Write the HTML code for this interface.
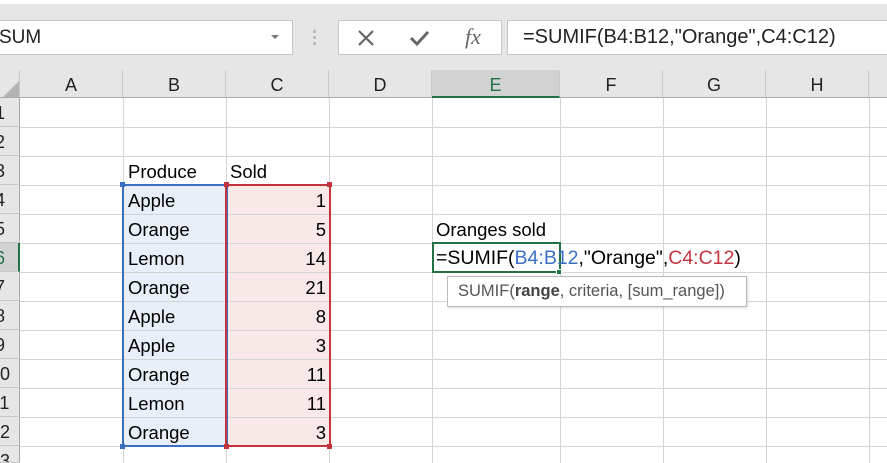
<!DOCTYPE html>
<html><head><meta charset="utf-8"><style>
*{margin:0;padding:0;box-sizing:border-box}
html,body{width:887px;height:463px;overflow:hidden}
body{background:#fff;font-family:"Liberation Sans",sans-serif;position:relative}
.a{position:absolute}
.top{left:0;top:0;width:887px;height:70px;background:#e6e6e6;border-top:4px solid #fff}
.box{background:#fff;border:1px solid #c6c6c6}
.hdr{top:70px;height:28px;background:#e6e6e6;border-right:1px solid #c8c8c8;border-bottom:1px solid #ababab;font-size:18px;color:#222;text-align:center;line-height:30px}
.vl{top:98px;width:1px;height:365px;background:#d4d4d4}
.hl{left:20px;height:1px;width:867px;background:#d4d4d4}
.rh{left:0;width:20px;height:29px;background:#e6e6e6;border-bottom:1px solid #c8c8c8;border-right:1px solid #ababab;font-size:18px;line-height:30px;color:#222;overflow:hidden}
.rh span{position:absolute;left:-20px;width:40px;text-align:center}
.t{font-size:18.5px;color:#000;line-height:29px;height:29px;white-space:nowrap}
</style></head><body>
<div class="a top"></div>
<div class="a box" style="left:-2px;top:20px;width:295px;height:35px;font-size:19px;line-height:33px;color:#222">SUM</div>
<div class="a" style="left:271px;top:35px;width:0;height:0;border-left:4px solid transparent;border-right:4px solid transparent;border-top:4px solid #777"></div>
<div class="a" style="left:313px;top:30px;width:3px;height:3px;background:#bbb;box-shadow:0 6px 0 #bbb,0 12px 0 #bbb"></div>
<div class="a box" style="left:338px;top:20px;width:164px;height:35px"></div>
<svg class="a" style="left:356px;top:28px" width="20" height="20"><path d="M3 3L17 17M17 3L3 17" stroke="#666" stroke-width="2.2"/></svg>
<svg class="a" style="left:409px;top:28px" width="22" height="20"><path d="M2 10L8 16L19 4" stroke="#666" stroke-width="3" fill="none"/></svg>
<div class="a" style="left:465px;top:24px;font-family:'Liberation Serif',serif;font-style:italic;font-size:22px;color:#666">fx</div>
<div class="a box" style="left:507px;top:20px;width:385px;height:35px;font-size:20px;line-height:33px;padding-left:15px;color:#222">=SUMIF(B4:B12,"Orange",C4:C12)</div>

<div class="a hdr" style="left:0;width:20px"></div>
<div class="a" style="left:3px;top:81px;width:0;height:0;border-left:16px solid transparent;border-bottom:16px solid #b4b4b4"></div>
<div class="a hdr" style="left:20px;width:103px">A</div>
<div class="a hdr" style="left:123px;width:103px">B</div>
<div class="a hdr" style="left:226px;width:103px">C</div>
<div class="a hdr" style="left:329px;width:103px">D</div>
<div class="a hdr" style="left:432px;width:128px;background:#d2d2d2;color:#217346;border-bottom:2px solid #217346">E</div>
<div class="a hdr" style="left:560px;width:103px">F</div>
<div class="a hdr" style="left:663px;width:103px">G</div>
<div class="a hdr" style="left:766px;width:103px">H</div>
<div class="a hdr" style="left:869px;width:30px"></div>

<div class="a" style="left:124px;top:185px;width:102px;height:261px;background:#e8eff9"></div>
<div class="a" style="left:227px;top:185px;width:102px;height:261px;background:#f9e8e8"></div>

<div class="a vl" style="left:123px"></div><div class="a vl" style="left:226px"></div><div class="a vl" style="left:329px"></div><div class="a vl" style="left:432px"></div><div class="a vl" style="left:560px"></div><div class="a vl" style="left:663px"></div><div class="a vl" style="left:766px"></div><div class="a vl" style="left:869px"></div>
<div class="a hl" style="top:127px"></div><div class="a hl" style="top:156px"></div><div class="a hl" style="top:185px"></div><div class="a hl" style="top:214px"></div><div class="a hl" style="top:243px"></div><div class="a hl" style="top:272px"></div><div class="a hl" style="top:301px"></div><div class="a hl" style="top:330px"></div><div class="a hl" style="top:359px"></div><div class="a hl" style="top:388px"></div><div class="a hl" style="top:417px"></div><div class="a hl" style="top:446px"></div>

<div class="a rh" style="top:98px"><span>1</span></div>
<div class="a rh" style="top:127px"><span>2</span></div>
<div class="a rh" style="top:156px"><span>3</span></div>
<div class="a rh" style="top:185px"><span>4</span></div>
<div class="a rh" style="top:214px"><span>5</span></div>
<div class="a rh" style="top:243px;background:#d2d2d2;color:#217346;border-right:2px solid #217346"><span>6</span></div>
<div class="a rh" style="top:272px"><span>7</span></div>
<div class="a rh" style="top:301px"><span>8</span></div>
<div class="a rh" style="top:330px"><span>9</span></div>
<div class="a rh" style="top:359px"><span>10</span></div>
<div class="a rh" style="top:388px"><span>11</span></div>
<div class="a rh" style="top:417px"><span>12</span></div>
<div class="a rh" style="top:446px;height:17px"><span>13</span></div>

<div class="a" style="left:122px;top:184px;width:106px;height:263px;border:2px solid #3a6fc4"></div>
<div class="a" style="left:225px;top:184px;width:106px;height:263px;border:2px solid #c4343f"></div>
<div class="a" style="left:120px;top:182px;width:5px;height:5px;background:#3a6fc4"></div>
<div class="a" style="left:120px;top:444px;width:5px;height:5px;background:#3a6fc4"></div>
<div class="a" style="left:224px;top:182px;width:5px;height:5px;background:#c4343f"></div>
<div class="a" style="left:224px;top:444px;width:5px;height:5px;background:#c4343f"></div>
<div class="a" style="left:327px;top:182px;width:5px;height:5px;background:#c4343f"></div>
<div class="a" style="left:327px;top:444px;width:5px;height:5px;background:#c4343f"></div>

<div class="a t" style="left:128px;top:157px">Produce</div>
<div class="a t" style="left:230px;top:157px">Sold</div>
<div class="a t" style="left:128px;top:186px">Apple</div>
<div class="a t" style="left:128px;top:215px">Orange</div>
<div class="a t" style="left:128px;top:244px">Lemon</div>
<div class="a t" style="left:128px;top:273px">Orange</div>
<div class="a t" style="left:128px;top:302px">Apple</div>
<div class="a t" style="left:128px;top:331px">Apple</div>
<div class="a t" style="left:128px;top:360px">Orange</div>
<div class="a t" style="left:128px;top:389px">Lemon</div>
<div class="a t" style="left:128px;top:418px">Orange</div>
<div class="a t" style="left:226px;top:186px;width:100px;text-align:right">1</div>
<div class="a t" style="left:226px;top:215px;width:100px;text-align:right">5</div>
<div class="a t" style="left:226px;top:244px;width:100px;text-align:right">14</div>
<div class="a t" style="left:226px;top:273px;width:100px;text-align:right">21</div>
<div class="a t" style="left:226px;top:302px;width:100px;text-align:right">8</div>
<div class="a t" style="left:226px;top:331px;width:100px;text-align:right">3</div>
<div class="a t" style="left:226px;top:360px;width:100px;text-align:right">11</div>
<div class="a t" style="left:226px;top:389px;width:100px;text-align:right">11</div>
<div class="a t" style="left:226px;top:418px;width:100px;text-align:right">3</div>

<div class="a t" style="left:436px;top:215px">Oranges sold</div>
<div class="a" style="left:432px;top:242px;width:129px;height:31px;border:2px solid #217346;background:#fff"></div>
<div class="a" style="left:556px;top:269px;width:6px;height:6px;background:#217346;border:1px solid #fff"></div>
<div class="a t" style="left:436px;top:244px;font-size:19.5px">=SUMIF(<span style="color:#3a6fc4">B4:B12</span>,"Orange",<span style="color:#c4343f">C4:C12</span>)</div>
<div class="a" style="left:447px;top:276px;width:300px;height:31px;background:#fff;border:1px solid #bbb;box-shadow:1px 1px 2px rgba(0,0,0,.15);font-size:16.5px;line-height:29px;padding-left:10px;color:#555;white-space:nowrap">SUMIF(<b style="color:#444">range</b>, criteria, [sum_range])</div>
</body></html>
